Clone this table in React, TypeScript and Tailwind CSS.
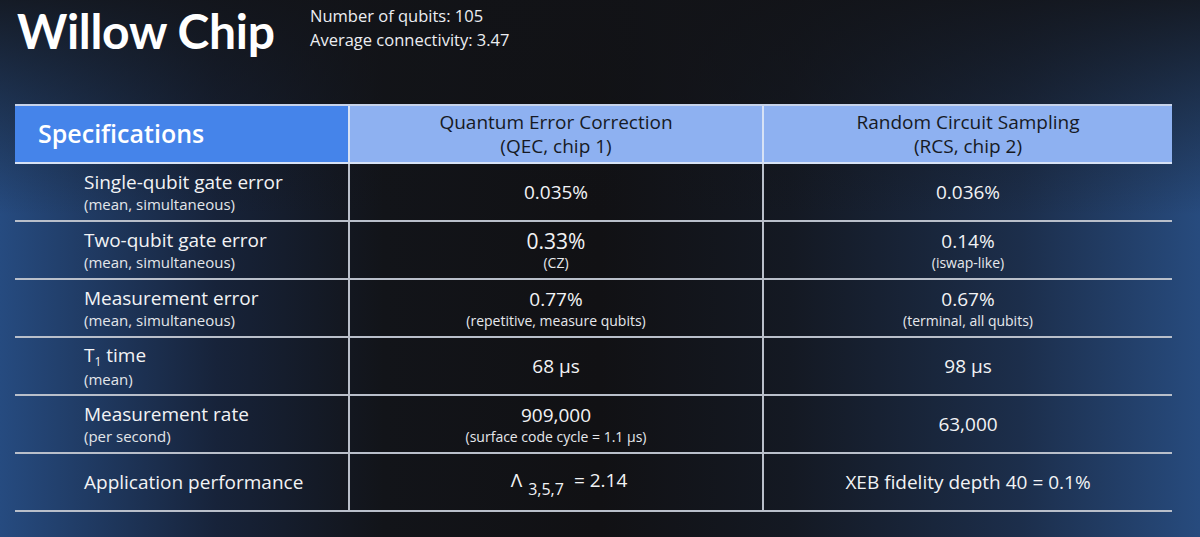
import { ReactNode } from "react";

type Row = {
  label: ReactNode;
  note?: string;
  qec: ReactNode;
  qecNote?: string;
  rcs: ReactNode;
  rcsNote?: string;
  big?: boolean;
};

const rows: Row[] = [
  { label: "Single-qubit gate error", note: "(mean, simultaneous)", qec: "0.035%", rcs: "0.036%" },
  {
    label: "Two-qubit gate error",
    note: "(mean, simultaneous)",
    qec: "0.33%",
    qecNote: "(CZ)",
    rcs: "0.14%",
    rcsNote: "(iswap-like)",
    big: true,
  },
  {
    label: "Measurement error",
    note: "(mean, simultaneous)",
    qec: "0.77%",
    qecNote: "(repetitive, measure qubits)",
    rcs: "0.67%",
    rcsNote: "(terminal, all qubits)",
  },
  {
    label: (
      <>
        T<span className="text-[12px] relative top-[4px]">1</span> time
      </>
    ),
    note: "(mean)",
    qec: "68 µs",
    rcs: "98 µs",
  },
  {
    label: "Measurement rate",
    note: "(per second)",
    qec: "909,000",
    qecNote: "(surface code cycle = 1.1 µs)",
    rcs: "63,000",
  },
  {
    label: "Application performance",
    qec: (
      <span className="inline-flex items-start pl-[26px]">
        <span>Λ</span>
        <span className="text-[16px] leading-none mt-[13px] ml-[6px] mr-[10px]">3,5,7</span>
        <span>= 2.14</span>
      </span>
    ),
    rcs: "XEB fidelity depth 40 = 0.1%",
  },
];

function ValueCell({ value, note, big, last }: { value: ReactNode; note?: string; big?: boolean; last?: boolean }) {
  return (
    <div
      className={`flex flex-col items-center justify-center text-center border-b-2 border-[#b9bfca] ${
        last ? "" : "border-r-2"
      }`}
    >
      <div className={`${big ? "text-[21px] leading-[26px]" : "text-[19px] leading-[25px]"} text-[#f2f3f5]`}>{value}</div>
      {note && <div className="text-[14px] leading-[18px] text-[#e6e8ec]">{note}</div>}
    </div>
  );
}

export default function App() {
  return (
    <div
      className="w-[1200px] h-[537px] overflow-hidden text-white bg-[#121317] bg-[linear-gradient(to_bottom,rgba(18,19,23,0.85)_0%,rgba(18,19,23,0)_40%),linear-gradient(to_right,#264b80_0%,#17233a_18%,#121419_32%,#111114_50%,#141923_66%,#1c2e4b_85%,#274b7e_100%)]"
      style={{ fontFamily: "'Open Sans', Lato, sans-serif" }}
    >
      {/* Title */}
      <div className="flex items-start pl-[17px] pt-[2px] h-[104px]">
        <h1
          className="text-[48px] font-bold leading-[58px] tracking-[-0.3px] w-[293px]"
          style={{ fontFamily: "Lato, sans-serif" }}
        >
          Willow Chip
        </h1>
        <div className="pt-[2px] text-[16.5px] leading-[24px] text-[#eceef2]">
          <div>Number of qubits: 105</div>
          <div>Average connectivity: 3.47</div>
        </div>
      </div>

      {/* Specs table */}
      <div className="ml-[15px] w-[1157px] grid grid-cols-[335px_414px_408px] border-t-2 border-[#c7d3ea]">
        {/* header */}
        <div className="h-[58px] flex items-center pl-[23px] bg-[#4584ea] border-b-2 border-r-2 border-[#d7e2f5] text-[25px] font-semibold text-white">
          Specifications
        </div>
        <div className="h-[58px] flex flex-col items-center justify-center bg-[#8eb1f1] border-b-2 border-r-2 border-[#d7e2f5] text-[19px] leading-[24px] text-[#161a24]">
          <div>Quantum Error Correction</div>
          <div>(QEC, chip 1)</div>
        </div>
        <div className="h-[58px] flex flex-col items-center justify-center bg-[#8eb1f1] border-b-2 border-[#d7e2f5] text-[19px] leading-[24px] text-[#161a24]">
          <div>Random Circuit Sampling</div>
          <div>(RCS, chip 2)</div>
        </div>

        {rows.map((r, i) => (
          <div key={i} className="contents">
            <div className="h-[58px] flex flex-col justify-center pl-[69px] border-b-2 border-r-2 border-[#b9bfca]">
              <div className="text-[19px] leading-[25px] text-[#f2f3f5]">{r.label}</div>
              {r.note && <div className="text-[15px] leading-[19px] text-[#e3e6ea]">{r.note}</div>}
            </div>
            <ValueCell value={r.qec} note={r.qecNote} big={r.big} />
            <ValueCell value={r.rcs} note={r.rcsNote} last />
          </div>
        ))}
      </div>
    </div>
  );
}
